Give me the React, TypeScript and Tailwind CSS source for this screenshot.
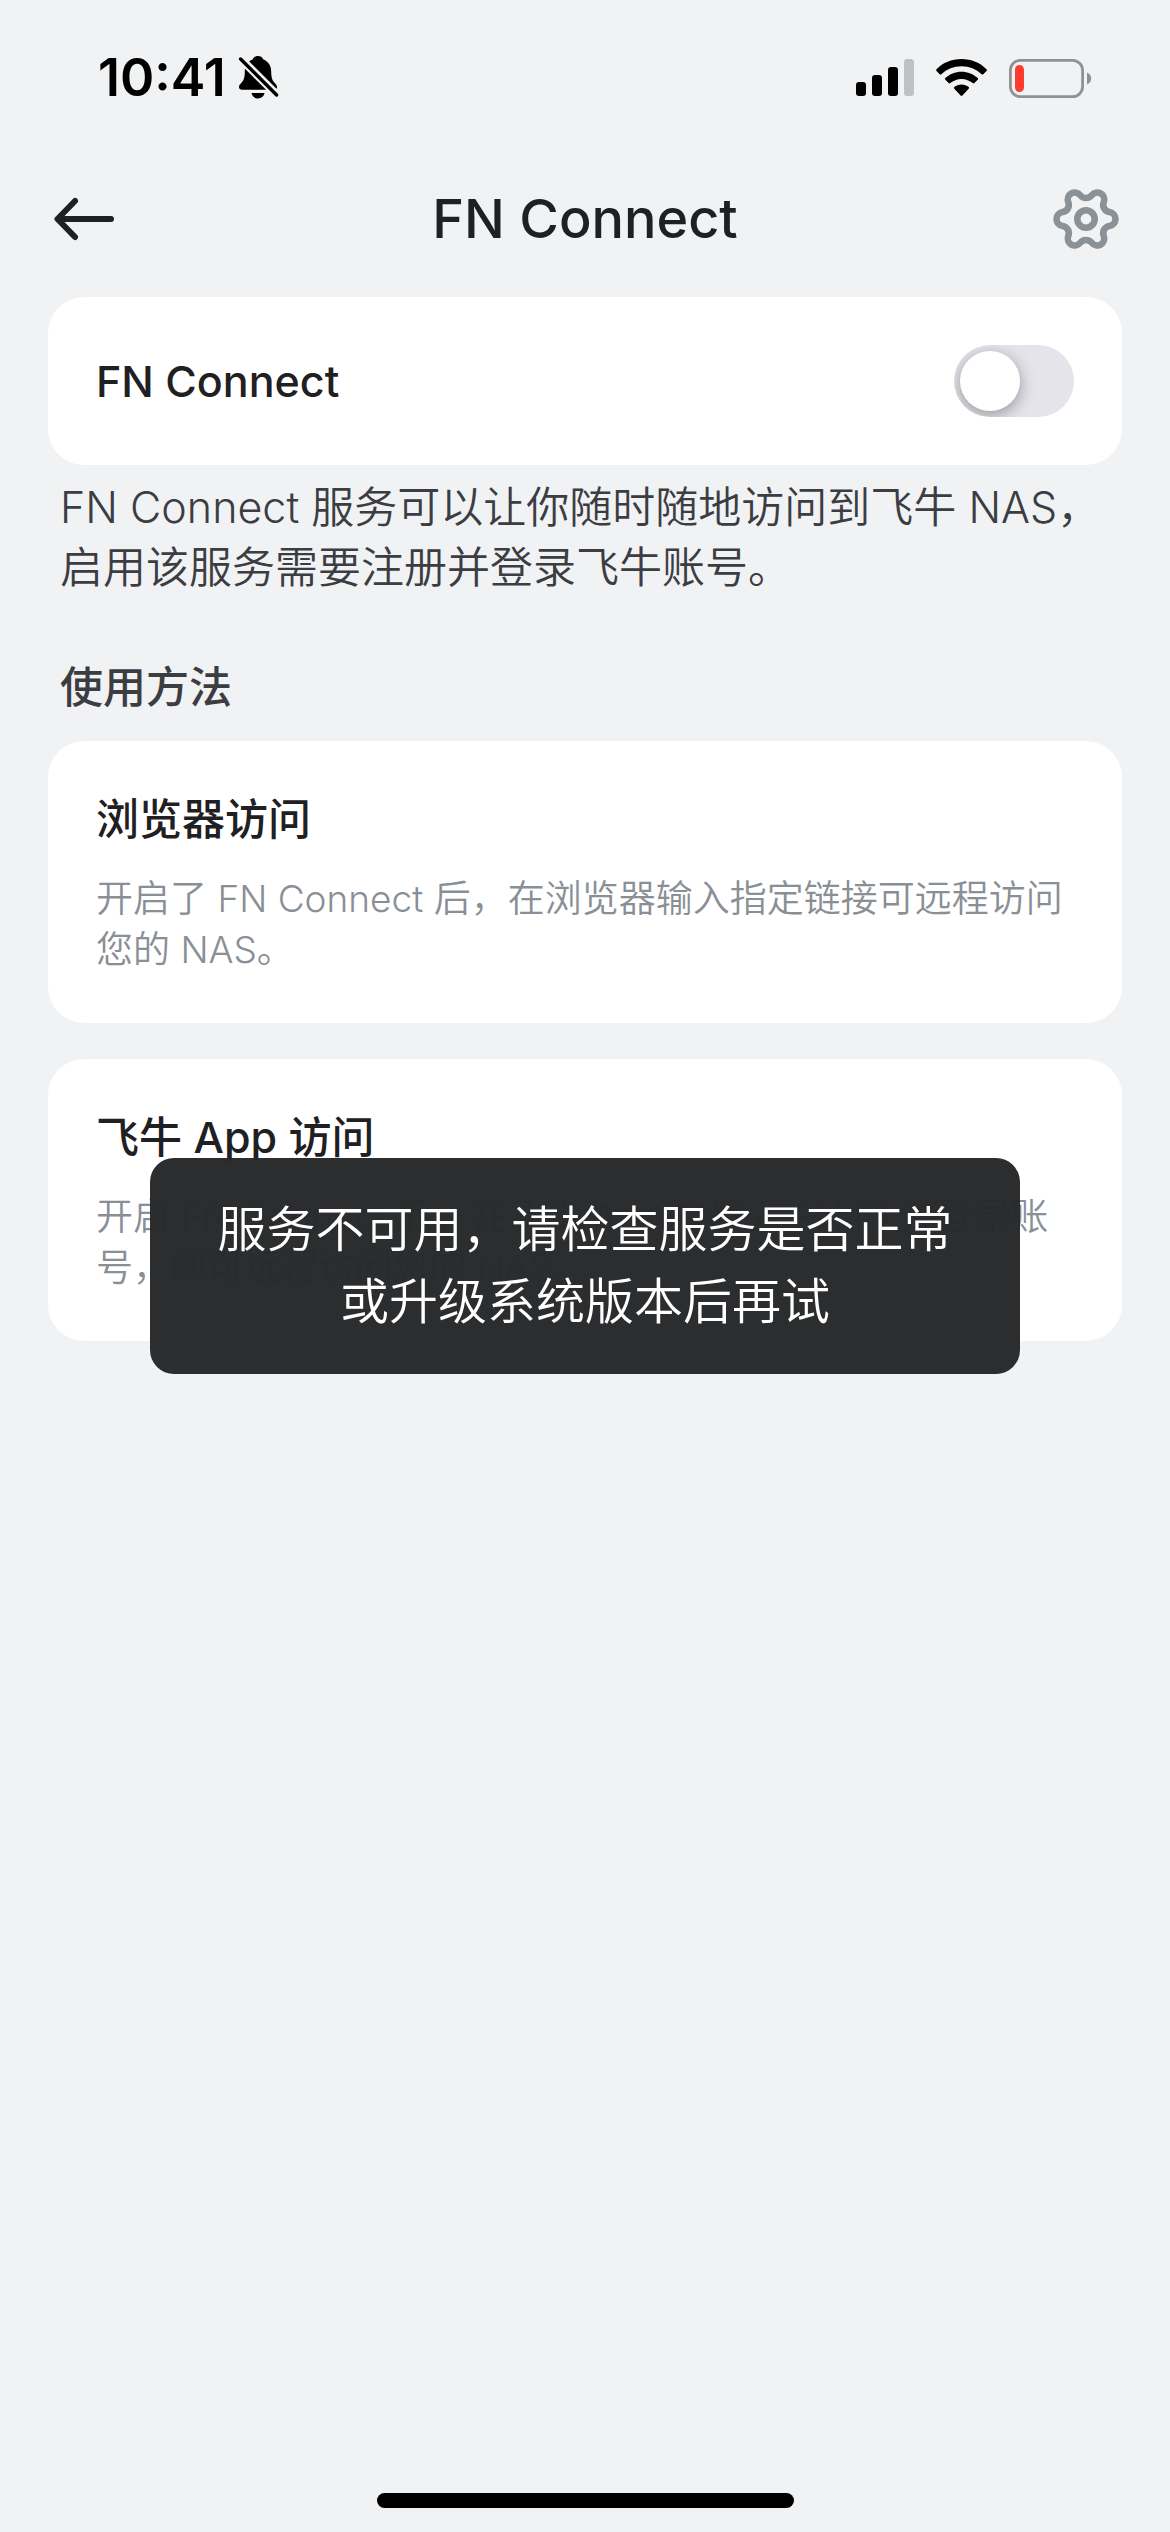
import React, { useState } from "react";

interface MethodCardProps {
  title: string;
  text: string;
}

const methods: MethodCardProps[] = [
  {
    title: "浏览器访问",
    text: "开启了 FN Connect 后，在浏览器输入指定链接可远程访问您的 NAS。",
  },
  {
    title: "飞牛 App 访问",
    text: "开启 FN Connect 后，在飞牛 App 中输入 FN ID 并登录账号，即可远程访问您的 NAS。",
  },
];

function BellOffIcon() {
  return (
    <svg width="41" height="46" viewBox="0 0 41 46" aria-hidden="true">
      <path
        d="M20 1c-3 0-4.600 1.600-5.400 3.600C9.500 6.600 6.800 11 6.800 16.500c0 7-1.500 9.500-4 12C1.300 30 1 31 1 32c0 1.700 1.200 2.700 3 2.700h32c1.800 0 3-1 3-2.700 0-1-.4-2-1.800-3.500-2.500-2.500-4-5-4-12 0-5.500-2.700-9.900-7.800-11.900C24.600 2.600 23 1 20 1zM13.500 38h13c-.6 3.300-3.200 5.400-6.500 5.400s-5.900-2.100-6.500-5.400z"
        fill="#000"
      />
      <path d="M1 2l39 39" stroke="#f1f2f4" strokeWidth="8" />
      <path d="M2.600 4l36 36" stroke="#000" strokeWidth="3.400" strokeLinecap="round" />
    </svg>
  );
}

function SignalIcon() {
  return (
    <svg width="58" height="38" viewBox="0 0 58 38" aria-hidden="true">
      <rect x="0" y="23" width="10" height="14" rx="3" />
      <rect x="16" y="16" width="10" height="21" rx="3" />
      <rect x="32" y="8" width="10" height="29" rx="3" />
      <rect x="48" y="0" width="10" height="37" rx="3" fill="#c0c1c3" />
    </svg>
  );
}

function WifiIcon() {
  return (
    <svg width="51" height="38" viewBox="0 0 51 38" aria-hidden="true">
      <path d="M25.500 0C35.500 0 44 3.700 50.500 10.200c.5.500.5 1.200 0 1.700l-3.200 3.300c-.5.500-1.200.5-1.700 0C40.200 10 33.300 7.200 25.500 7.200S10.800 10 5.400 15.200c-.5.500-1.200.5-1.700 0L.5 11.900c-.5-.5-.5-1.200 0-1.700C7 3.700 15.500 0 25.500 0z" />
      <path d="M25.500 12.800c6.300 0 11.900 2.400 16.200 6.300.5.500.5 1.200 0 1.700l-3.300 3.300c-.5.500-1.200.5-1.700 0-3-2.600-6.800-4.200-11.200-4.200s-8.200 1.600-11.200 4.200c-.5.500-1.200.5-1.700 0l-3.300-3.300c-.5-.5-.5-1.200 0-1.700 4.300-3.900 9.900-6.300 16.200-6.300z" />
      <path d="M25.500 25.500c2.800 0 5.300 1 7.200 2.600.5.500.5 1.100 0 1.600l-6.300 6.900c-.5.500-1.300.5-1.800 0l-6.300-6.900c-.5-.5-.5-1.100 0-1.600 1.900-1.600 4.400-2.600 7.200-2.600z" />
    </svg>
  );
}

function BatteryIcon() {
  return (
    <svg width="83" height="39" viewBox="0 0 83 39" aria-hidden="true">
      <rect x="1.400" y="1.400" width="72.200" height="36.200" rx="10" fill="none" stroke="#8f9193" strokeWidth="2.800" />
      <path d="M78 13.500c2.600.8 4.200 3.200 4.200 6s-1.600 5.200-4.200 6z" fill="#8f9193" />
      <rect x="6" y="6" width="9" height="27" rx="4.500" fill="#ff3b30" />
    </svg>
  );
}

function BackIcon() {
  return (
    <svg width="60" height="44" viewBox="0 0 60 44" fill="none" stroke="#1f2022" strokeWidth="6" strokeLinecap="round" strokeLinejoin="round" aria-hidden="true">
      <path d="M57 22H4M21 4L3.500 22 21 40" />
    </svg>
  );
}

function GearIcon() {
  return (
    <svg width="66" height="66" viewBox="-33 -33 66 66" fill="none" stroke="#8a9197" strokeWidth="6.600" strokeLinejoin="round" aria-hidden="true">
      <path d="M23.480 -6.930A7 7 0 0 1 23.480 6.930A7.260 7.260 0 0 0 17.740 16.870A7 7 0 0 1 5.740 23.800A7.260 7.260 0 0 0 -5.740 23.800A7 7 0 0 1 -17.740 16.870A7.260 7.260 0 0 0 -23.480 6.930A7 7 0 0 1 -23.480 -6.930A7.260 7.260 0 0 0 -17.740 -16.870A7 7 0 0 1 -5.740 -23.800A7.260 7.260 0 0 0 5.740 -23.800A7 7 0 0 1 17.740 -16.870A7.260 7.260 0 0 0 23.480 -6.930Z" />
      <circle r="8.700" />
    </svg>
  );
}

function StatusBar() {
  return (
    <div className="flex h-[156px] items-center justify-between pl-[98px] pr-[78px]">
      <div className="flex items-center gap-3">
        <span className="text-[52px] leading-none font-semibold text-black">10:41</span>
        <BellOffIcon />
      </div>
      <div className="flex items-center gap-[22px]">
        <SignalIcon />
        <WifiIcon />
        <BatteryIcon />
      </div>
    </div>
  );
}

function MethodCard({ title, text }: MethodCardProps) {
  return (
    <article className="rounded-[36px] bg-white px-12 py-12">
      <h3 className="text-[43px] leading-[60px] font-medium text-[#1f2022]">{title}</h3>
      <p className="mt-6 text-[37px] leading-[51px] font-[350] text-[#8a8f96]">{text}</p>
    </article>
  );
}

function App() {
  const [enabled, setEnabled] = useState(false);

  return (
    <div className="relative flex min-h-screen w-full flex-col bg-[#f1f2f4] font-['Inter','Noto_Sans_CJK_SC',sans-serif]">
      <StatusBar />
      <header className="grid h-[126px] grid-cols-[1fr_auto_1fr] items-center px-[51px]">
        <button type="button" aria-label="返回" className="justify-self-start pl-[3px]">
          <BackIcon />
        </button>
        <h1 className="text-[54px] leading-[72px] font-medium text-[#1f2022]">FN Connect</h1>
        <button type="button" aria-label="设置" className="justify-self-end">
          <GearIcon />
        </button>
      </header>

      <main className="px-12 pt-[15px]">
        <div className="flex h-[168px] items-center justify-between rounded-[36px] bg-white px-12">
          <label htmlFor="fnConnect" className="text-[43px] leading-[60px] font-[450] text-[#1f2022]">
            FN Connect
          </label>
          <input
            id="fnConnect"
            type="checkbox"
            role="switch"
            checked={enabled}
            onChange={(e) => setEnabled(e.target.checked)}
            className="h-[72px] w-[120px] appearance-none overflow-hidden rounded-full bg-[#e5e4ea] p-[6px] before:block before:size-[60px] before:rounded-full before:bg-white before:shadow-[0_4px_16px_rgba(0,0,0,0.35)] checked:bg-[#34c759] checked:before:translate-x-12"
          />
        </div>
        <p className="mt-3 px-3 text-[43px] leading-[60px] font-[350] text-[#3c3d42]">
          FN Connect 服务可以让你随时随地访问到飞牛 NAS，启用该服务需要注册并登录飞牛账号。
        </p>

        <h2 className="mt-[60px] px-3 text-[43px] leading-[60px] font-medium text-[#3c3d42]">使用方法</h2>
        <div className="mt-6 flex flex-col gap-9">
          {methods.map((method) => (
            <MethodCard key={method.title} title={method.title} text={method.text} />
          ))}
        </div>
      </main>

      <footer className="mt-auto flex justify-center pb-6">
        <div className="h-[15px] w-[417px] rounded-full bg-black"></div>
      </footer>

      <div className="pointer-events-none absolute inset-0 flex items-center justify-center">
        <div role="status" className="rounded-3xl bg-[#27292b]/98 px-[67px] py-9 text-center text-[49px] leading-[72px] font-[350] text-white">
          服务不可用，请检查服务是否正常
          <br />
          或升级系统版本后再试
        </div>
      </div>
    </div>
  );
}

export default App;
